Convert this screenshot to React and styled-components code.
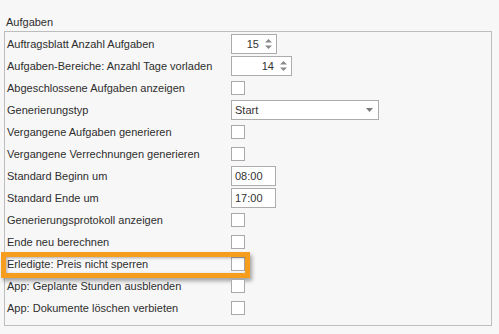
import styled, { createGlobalStyle } from 'styled-components'

const GlobalStyle = createGlobalStyle`
  html, body {
    margin: 0;
    padding: 0;
    background: #f7f7f7;
  }
  body {
    font-family: 'Liberation Sans', Arial, sans-serif;
    font-size: 11px;
    color: #2e2e2e;
  }
`

const Page = styled.div`
  width: 499px;
  height: 334px;
  padding: 14px 0 0 4px;
  box-sizing: border-box;
`

const GroupTitle = styled.div`
  height: 17px;
  line-height: 17px;
  padding-left: 2px;
`

const GroupBox = styled.div`
  width: 488px;
  height: 295px;
  box-sizing: border-box;
  border: 1px solid #bdbdbd;
  padding: 1px 0 0 0;
`

const Row = styled.div`
  position: relative;
  display: grid;
  grid-template-columns: 224px 1fr;
  align-items: center;
  height: 22px;
  padding-left: 2px;
`

const Label = styled.div`
  white-space: nowrap;
`

const Field = styled.div`
  position: relative;
  width: ${p => p.$w}px;
  height: 20px;
  box-sizing: border-box;
  border: 1px solid #acacac;
  background: #ffffff;
  display: flex;
  align-items: center;
  justify-content: ${p => (p.$right ? 'flex-end' : 'flex-start')};
  padding: ${p => (p.$right ? '0 17px 0 0' : '0 0 0 3px')};
  color: #333;
`

const Arrows = styled.svg`
  position: absolute;
  right: 3px;
  top: 3px;
`

const DropArrow = styled.svg`
  position: absolute;
  right: 5px;
  top: 7px;
`

const Check = styled.div`
  width: 14px;
  height: 14px;
  box-sizing: border-box;
  border: 1px solid #a9a9a9;
  background: #ffffff;
`

const Highlight = styled.div`
  position: absolute;
  left: -4px;
  top: -1px;
  width: 249px;
  height: 26px;
  box-sizing: border-box;
  border: 5px solid #f79d1e;
  box-shadow: 2px 3px 4px rgba(0, 0, 0, 0.35), inset 1px 1px 3px rgba(0, 0, 0, 0.3);
  pointer-events: none;
`

function Spin({ value, width }) {
  return (
    <Field $w={width} $right>
      {value}
      <Arrows width="9" height="12" viewBox="0 0 9 12">
        <path d="M1 4.5 L4.5 1 L8 4.5 Z" fill="#8a8a8a" />
        <path d="M1 7.5 L4.5 11 L8 7.5 Z" fill="#8a8a8a" />
      </Arrows>
    </Field>
  )
}

function Combo({ value }) {
  return (
    <Field $w={148}>
      {value}
      <DropArrow width="7" height="4" viewBox="0 0 7 4">
        <path d="M0 0 L7 0 L3.5 4 Z" fill="#7a7a7a" />
      </DropArrow>
    </Field>
  )
}

const rows = [
  { label: 'Auftragsblatt Anzahl Aufgaben', type: 'spin', value: '15', width: 46 },
  { label: 'Aufgaben-Bereiche: Anzahl Tage vorladen', type: 'spin', value: '14', width: 61 },
  { label: 'Abgeschlossene Aufgaben anzeigen', type: 'check' },
  { label: 'Generierungstyp', type: 'combo', value: 'Start' },
  { label: 'Vergangene Aufgaben generieren', type: 'check' },
  { label: 'Vergangene Verrechnungen generieren', type: 'check' },
  { label: 'Standard Beginn um', type: 'text', value: '08:00' },
  { label: 'Standard Ende um', type: 'text', value: '17:00' },
  { label: 'Generierungsprotokoll anzeigen', type: 'check' },
  { label: 'Ende neu berechnen', type: 'check' },
  { label: 'Erledigte: Preis nicht sperren', type: 'check', marked: true },
  { label: 'App: Geplante Stunden ausblenden', type: 'check' },
  { label: 'App: Dokumente löschen verbieten', type: 'check' },
]

function Control({ row }) {
  if (row.type === 'spin') return <Spin value={row.value} width={row.width} />
  if (row.type === 'combo') return <Combo value={row.value} />
  if (row.type === 'text') return <Field $w={45}>{row.value}</Field>
  return <Check />
}

export default function App() {
  return (
    <>
      <GlobalStyle />
      <Page>
        <GroupTitle>Aufgaben</GroupTitle>
        <GroupBox>
          {rows.map(row => (
            <Row key={row.label}>
              <Label>{row.label}</Label>
              <div>
                <Control row={row} />
              </div>
              {row.marked && <Highlight />}
            </Row>
          ))}
        </GroupBox>
      </Page>
    </>
  )
}
